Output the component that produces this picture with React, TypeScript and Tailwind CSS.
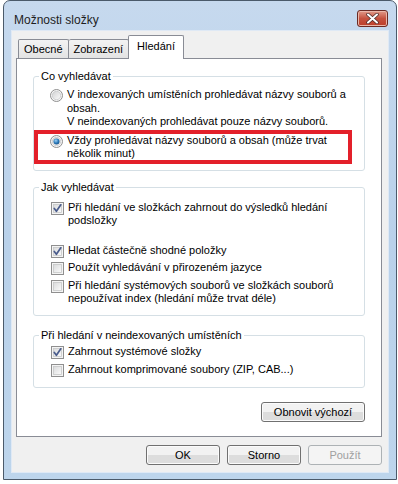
import React from 'react';

const font = { fontFamily: '"Liberation Sans", Arial, sans-serif' };

function CheckBox({ checked }: { checked?: boolean }) {
    return (
        <svg width="13" height="13" viewBox="0 0 13 13" className="shrink-0">
            <defs>
                <linearGradient id="cbg" x1="0" y1="0" x2="1" y2="1">
                    <stop offset="0" stopColor="#d9dadb" />
                    <stop offset="1" stopColor="#fbfbfb" />
                </linearGradient>
            </defs>
            <rect x="0.5" y="0.5" width="12" height="12" fill="#f4f4f4" stroke="#8f8f8f" />
            <rect x="2.5" y="2.5" width="8" height="8" fill="url(#cbg)" stroke="#c6c7c8" strokeWidth="0.8" />
            {checked && (
                <path d="M3.3 6.4 L5.4 9.3 L9.8 2.8" fill="none" stroke="#4a5c8c" strokeWidth="1.7" strokeLinecap="round" strokeLinejoin="round" />
            )}
        </svg>
    );
}

function Radio({ checked }: { checked?: boolean }) {
    return (
        <svg width="13" height="13" viewBox="0 0 13 13" className="shrink-0">
            <defs>
                <linearGradient id="rbg" x1="0" y1="0" x2="1" y2="1">
                    <stop offset="0" stopColor="#d2d3d4" />
                    <stop offset="1" stopColor="#fbfbfb" />
                </linearGradient>
                <radialGradient id="rdot" cx="0.4" cy="0.35" r="0.7">
                    <stop offset="0" stopColor="#9fd2f6" />
                    <stop offset="0.6" stopColor="#2a78b8" />
                    <stop offset="1" stopColor="#164f85" />
                </radialGradient>
            </defs>
            <circle cx="6.5" cy="6.5" r="6" fill="#f6f6f6" stroke="#8f8f8f" />
            <circle cx="6.5" cy="6.5" r="4.2" fill="url(#rbg)" stroke="#c3c4c5" strokeWidth="0.7" />
            {checked && <circle cx="6.5" cy="6.5" r="3" fill="url(#rdot)" />}
        </svg>
    );
}

function Item({ children, box }: { children: React.ReactNode; box: React.ReactNode }) {
    return (
        <div className="flex items-start gap-[4px]">
            <div className="pt-[1px]">{box}</div>
            <div className="leading-[13.5px]">{children}</div>
        </div>
    );
}

function Group({ title, className, children }: { title: string; className?: string; children: React.ReactNode }) {
    return (
        <div className={`relative border border-[#d5dfe5] rounded-[3px] ${className ?? ''}`}>
            <span className="absolute -top-[8px] left-[5px] bg-white px-[2px] leading-[14px]">{title}</span>
            {children}
        </div>
    );
}

function Button({ children, disabled, className }: { children: React.ReactNode; disabled?: boolean; className?: string }) {
    return (
        <div
            className={`h-[20px] flex items-center justify-center rounded-[3px] border ${
                disabled
                    ? 'border-[#adb2b5] text-[#a0a0a0] bg-[#f4f4f4]'
                    : 'border-[#707070] bg-gradient-to-b from-[#f2f2f2] from-50% to-[#dddddd] to-50% shadow-[inset_0_0_0_1px_#fbfbfb]'
            } ${className ?? ''}`}
        >
            {children}
        </div>
    );
}

export default function App() {
    return (
        <div className="w-[398px] h-[484px] bg-white text-[11px] text-black overflow-hidden" style={font}>
            <div className="ml-[3px] w-[394px] h-[480px] border border-[#4b5a6a] rounded-t-[7px] bg-gradient-to-b from-[#c6d9ee] via-[#b9d1ea] to-[#bdd5ec] flex flex-col px-[7px] pb-[6px]">
                {/* title bar */}
                <div className="h-[29px] shrink-0 flex items-start justify-between">
                    <span className="mt-[12px] ml-[3px] text-[12px] leading-[14px] text-[#1e1e1e]">Možnosti složky</span>
                    <div className="mt-[9px] mr-[1px] w-[31px] h-[17px] rounded-[3px] border border-[#6b2b24] bg-gradient-to-b from-[#e09a8a] via-[#c5523f] to-[#bd3e2a] flex items-center justify-center shadow-[inset_0_0_0_1px_#eab6a8]">
                        <svg width="13" height="11" viewBox="0 0 13 11">
                            <path d="M2 1.5 L11 9.5 M11 1.5 L2 9.5" stroke="#4a2a28" strokeWidth="3.4" strokeLinecap="round" />
                            <path d="M2 1.5 L11 9.5 M11 1.5 L2 9.5" stroke="#ffffff" strokeWidth="2" strokeLinecap="round" />
                        </svg>
                    </div>
                </div>

                {/* client */}
                <div className="flex-1 bg-[#f0f0f0] border border-[#dfe9f5] flex flex-col pl-[4px] pr-[6px] pt-[4px]">
                    {/* tabs */}
                    <div className="flex items-end h-[23px] pl-[2px] relative z-10">
                        <div className="h-[19px] px-[5px] flex items-center border border-[#898c95] border-b-0 rounded-t-[2px] bg-gradient-to-b from-[#f3f3f3] to-[#e3e3e3]">Obecné</div>
                        <div className="h-[19px] px-[5px] flex items-center border border-[#898c95] border-l-0 border-b-0 rounded-t-[2px] bg-gradient-to-b from-[#f3f3f3] to-[#e3e3e3]">Zobrazení</div>
                        <div className="h-[24px] -mb-[1px] px-[8px] pb-[3px] flex items-center border border-[#898c95] border-b-0 -ml-[1px] rounded-t-[2px] bg-white">Hledání</div>
                    </div>

                    {/* panel */}
                    <div className="h-[379px] bg-white border border-[#898c95] px-[16px] pt-[17px] flex flex-col">
                        <Group title="Co vyhledávat" className="pl-[16px] pt-[11px] pb-[9px]">
                            <Item box={<Radio />}>
                                V indexovaných umístěních prohledávat názvy souborů a<br />
                                obsah.<br />
                                V neindexovaných prohledávat pouze názvy souborů.
                            </Item>
                            <div className="relative mt-[5px]">
                                <div className="absolute -left-[16px] -top-[4px] w-[318px] h-[34px] border-[4px] border-[#e3202a] pointer-events-none" />
                                <Item box={<Radio checked />}>
                                    Vždy prohledávat názvy souborů a obsah (může trvat<br />
                                    několik minut)
                                </Item>
                            </div>
                        </Group>

                        <Group title="Jak vyhledávat" className="mt-[16px] pl-[17px] pt-[13px] pb-[9px]">
                            <Item box={<CheckBox checked />}>
                                Při hledání ve složkách zahrnout do výsledků hledání<br />
                                podsložky
                            </Item>
                            <div className="mt-[16px] flex flex-col gap-[3.5px]">
                                <Item box={<CheckBox checked />}>Hledat částečně shodné položky</Item>
                                <Item box={<CheckBox />}>Použít vyhledávání v přirozeném jazyce</Item>
                                <Item box={<CheckBox />}>
                                    Při hledání systémových souborů ve složkách souborů<br />
                                    nepoužívat index (hledání může trvat déle)
                                </Item>
                            </div>
                        </Group>

                        <Group title="Při hledání v neindexovaných umístěních" className="mt-[19px] pl-[17px] pt-[9px] pb-[10px]">
                            <div className="flex flex-col gap-[4.5px]">
                                <Item box={<CheckBox checked />}>Zahrnout systémové složky</Item>
                                <Item box={<CheckBox />}>Zahrnout komprimované soubory (ZIP, CAB...)</Item>
                            </div>
                        </Group>

                        <div className="mt-[14px] flex justify-end">
                            <Button className="w-[104px]">Obnovit výchozí</Button>
                        </div>
                    </div>

                    {/* dialog buttons */}
                    <div className="mt-[8px] flex justify-end gap-[7px]">
                        <Button className="w-[74px] border-[#3c7fb1] shadow-[inset_0_0_0_1px_#9cd5f3]">OK</Button>
                        <Button className="w-[74px]">Storno</Button>
                        <Button className="w-[74px]" disabled>Použít</Button>
                    </div>
                </div>
            </div>
        </div>
    );
}
